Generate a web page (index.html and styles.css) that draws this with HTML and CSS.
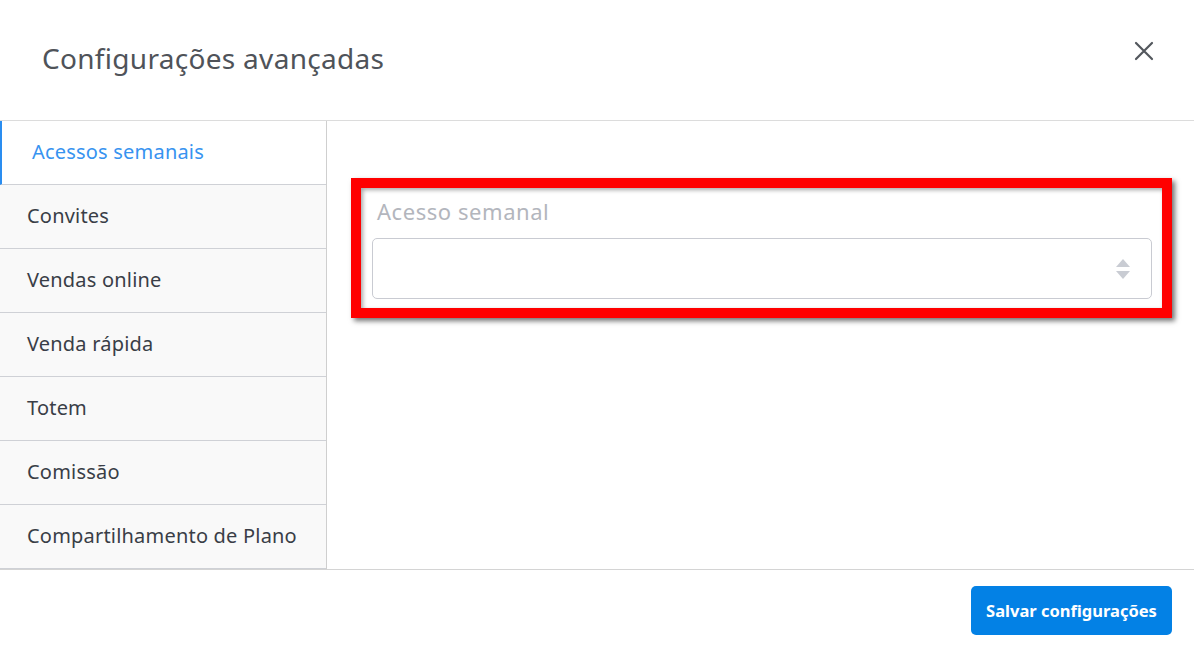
FILE: index.html
```html
<!DOCTYPE html>
<html lang="pt-BR">
<head>
<meta charset="utf-8">
<title>Configurações avançadas</title>
<link rel="stylesheet" href="styles.css">
</head>
<body>
<div class="modal">
  <header class="modal-header">
    <h1 class="modal-title">Configurações avançadas</h1>
    <button class="close-btn" aria-label="Fechar">
      <svg width="20" height="20" viewBox="0 0 20 20"><path d="M2 2 L18 18 M18 2 L2 18" stroke="#53575d" stroke-width="2.2" stroke-linecap="round" fill="none"/></svg>
    </button>
  </header>
  <div class="modal-body">
    <nav class="sidebar">
      <a class="tab active">Acessos semanais</a>
      <a class="tab">Convites</a>
      <a class="tab">Vendas online</a>
      <a class="tab">Venda rápida</a>
      <a class="tab">Totem</a>
      <a class="tab">Comissão</a>
      <a class="tab">Compartilhamento de Plano</a>
    </nav>
    <section class="content">
      <div class="highlight">
        <label class="field-label">Acesso semanal</label>
        <div class="select">
          <svg class="arrows" width="16" height="22" viewBox="0 0 16 22"><path d="M8 1 L15 9 L1 9 Z M8 21 L15 13 L1 13 Z" fill="#c9ccd3"/></svg>
        </div>
      </div>
    </section>
  </div>
  <footer class="modal-footer">
    <button class="save-btn">Salvar configurações</button>
  </footer>
</div>
</body>
</html>
```
FILE: styles.css
```css
* { box-sizing: border-box; }
html, body { margin: 0; padding: 0; background: #ffffff; }
body { font-family: "Noto Sans", "Open Sans", sans-serif; width: 1194px; height: 650px; overflow: hidden; }
.modal { width: 1194px; height: 650px; display: flex; flex-direction: column; background: #fff; }
.modal-header { height: 121px; border-bottom: 1px solid #dcdcdc; display: flex; align-items: center; justify-content: space-between; padding: 0 40px 0 42px; flex: none; }
.modal-title { margin: 0; font-weight: 400; font-size: 28px; color: #4f5359; letter-spacing: 0.3px; position: relative; top: -2px; }
.close-btn { background: none; border: 0; padding: 0; width: 20px; height: 20px; cursor: pointer; position: relative; top: -9px; }
.close-btn svg { display: block; }
.modal-body { display: flex; flex: none; height: 448px; }
.sidebar { width: 327px; border-right: 1px solid #cfcfcf; display: flex; flex-direction: column; flex: none; }
.tab { height: 64px; border-bottom: 1px solid #cfd1d6; background: #f9f9f9; display: flex; align-items: center; padding: 0 0 2px 27px; font-size: 20px; letter-spacing: 0.2px; color: #393e47; }
.tab.active { background: #fff; color: #3793f0; padding-left: 30px; border-left: 2px solid #2a8df0; height: 64px; }
.content { flex: 1; padding: 57px 22px 0 24px; }
.highlight { border: 10px solid #ff0000; box-shadow: 3px 3px 5px rgba(0,0,0,0.55), inset 2px 2px 4px rgba(0,0,0,0.35); padding: 8px 10px 9px 11px; display: flex; flex-direction: column; }
.field-label { font-size: 22px; letter-spacing: 0.55px; color: #b3b6bd; padding-left: 5px; line-height: 30px; margin-bottom: 12px; }
.select { height: 61px; border: 1px solid #c9cbd2; border-radius: 5px; display: flex; align-items: center; justify-content: flex-end; padding-right: 20px; }
.arrows { display: block; }
.modal-footer { flex: 1; border-top: 1px solid #d4d4d4; display: flex; align-items: center; justify-content: flex-end; padding-right: 22px; }
.save-btn { background: #0381e5; color: #fff; border: 0; border-radius: 5px; width: 201px; height: 49px; font-family: inherit; font-size: 16.5px; font-weight: 700; cursor: pointer; }
```
